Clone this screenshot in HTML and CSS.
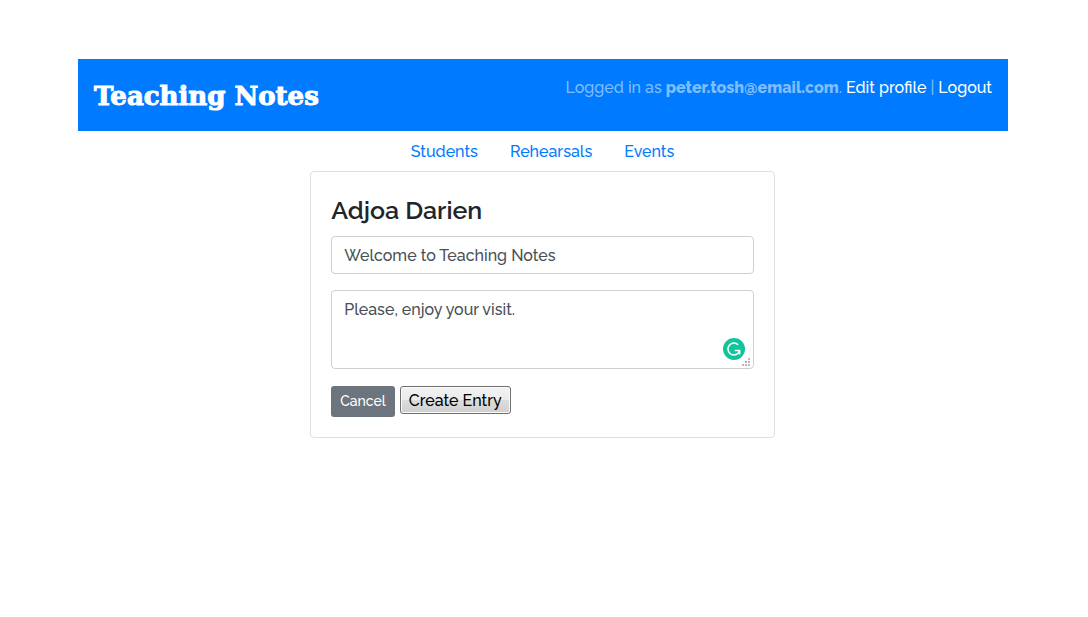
FILE: index.html
```html
<!DOCTYPE html>
<html lang="en">
<head>
<meta charset="utf-8">
<meta name="viewport" content="width=device-width, initial-scale=1">
<title>Teaching Notes</title>
<link rel="stylesheet" href="styles.css">
</head>
<body>
<div class="page">
  <header class="header">
    <h1 class="brand">Teaching Notes</h1>
    <p class="account">Logged in as <strong class="email">peter.tosh@email.com</strong>. <a class="account-link" href="#profile">Edit profile</a> | <a class="account-link" href="#logout">Logout</a></p>
  </header>
  <div class="content">
    <nav class="nav" aria-label="Main">
      <a class="nav-link" href="#students">Students</a>
      <a class="nav-link" href="#rehearsals">Rehearsals</a>
      <a class="nav-link" href="#events">Events</a>
    </nav>
    <main class="card">
      <h2 class="card-title">Adjoa Darien</h2>
      <form class="form">
        <input class="control" type="text" aria-label="Title" value="Welcome to Teaching Notes">
        <div class="note">
          <textarea class="control control-area" aria-label="Note" rows="2" spellcheck="false">Please, enjoy your visit.</textarea>
          <svg class="badge" viewBox="0 0 22 22" aria-hidden="true">
            <circle cx="11" cy="11" r="11" fill="#15c39a"/>
            <path d="M15.2 6.8A6 6 0 1 0 15.6 14.8L16.4 12.4M11.8 12.4H16.6V16.4" fill="none" stroke="#fff" stroke-width="1.5"/>
          </svg>
          <svg class="grip" viewBox="0 0 8 8" aria-hidden="true">
            <path d="M6 0h2v2H6zM3 3h2v2H3zM6 3h2v2H6zM0 6h2v2H0zM3 6h2v2H3zM6 6h2v2H6z" fill="#bdb8b8"/>
          </svg>
        </div>
        <div class="actions">
          <button class="cancel" type="button">Cancel</button>
          <button class="create" type="submit">Create Entry</button>
        </div>
      </form>
    </main>
  </div>
</div>
</body>
</html>
```
FILE: styles.css
```css
*, *::before, *::after { box-sizing: border-box; }

body {
  margin: 0;
  background: #fff;
  color: #212529;
  font-family: Raleway, Lato, sans-serif;
  font-size: 16px;
  font-weight: 500;
  line-height: 24px;
}

.page { padding: 59px 80px 24px 78px; }

.header {
  display: flex;
  justify-content: space-between;
  align-items: flex-start;
  padding: 16px 16px 14px;
  background: #007bff;
}

.brand {
  margin: 0;
  color: #fff;
  font-family: "DejaVu Serif", serif;
  font-size: 26px;
  font-weight: 700;
  line-height: 42px;
  -webkit-text-stroke: 1px #fff;
}

.account { margin: 0; padding-top: 1px; color: #80bdff; }
.email { font-weight: 800; }
.account-link { color: #fff; text-decoration: none; }

.content { padding-right: 1px; }

.nav { display: flex; justify-content: center; }
.nav-link {
  padding: 9px 16px 7px;
  color: #007bff;
  text-decoration: none;
}

.card {
  width: 50%;
  margin: 0 auto;
  padding: 20px;
  border: 1px solid #dfdfdf;
  border-radius: 4px;
}

.card-title {
  margin: 3px 0 11px;
  font-size: 25px;
  font-weight: 600;
  line-height: 30px;
}

.form { display: flex; flex-direction: column; gap: 16px; }

.control {
  display: block;
  width: 100%;
  height: 38px;
  margin: 0;
  padding: 6px 12px;
  border: 1px solid #cecfd1;
  border-radius: 4px;
  background: #fff;
  color: #495057;
  font: inherit;
}
.control-area { height: 79px; padding-top: 7px; resize: none; }

.note { position: relative; }
.badge { position: absolute; right: 9px; bottom: 9px; width: 22px; height: 22px; }
.grip { position: absolute; right: 4px; bottom: 3px; width: 8px; height: 8px; }

.actions { display: flex; align-items: flex-start; gap: 5px; padding-top: 1px; }

.cancel {
  height: 31px;
  padding: 0 9px 1px;
  border: 0;
  border-radius: 3px;
  background: #6c757d;
  color: #fff;
  font-family: inherit;
  font-size: 14px;
  font-weight: 500;
}

.create {
  height: 28px;
  padding: 1px 8px 0;
  border: 1px solid #707070;
  border-radius: 3px;
  background: linear-gradient(#f2f2f2 0%, #ebebeb 50%, #dddddd 50%, #cfcfcf 100%);
  box-shadow: inset 0 0 0 1px #fafafa;
  color: #000;
  font: inherit;
}
```
